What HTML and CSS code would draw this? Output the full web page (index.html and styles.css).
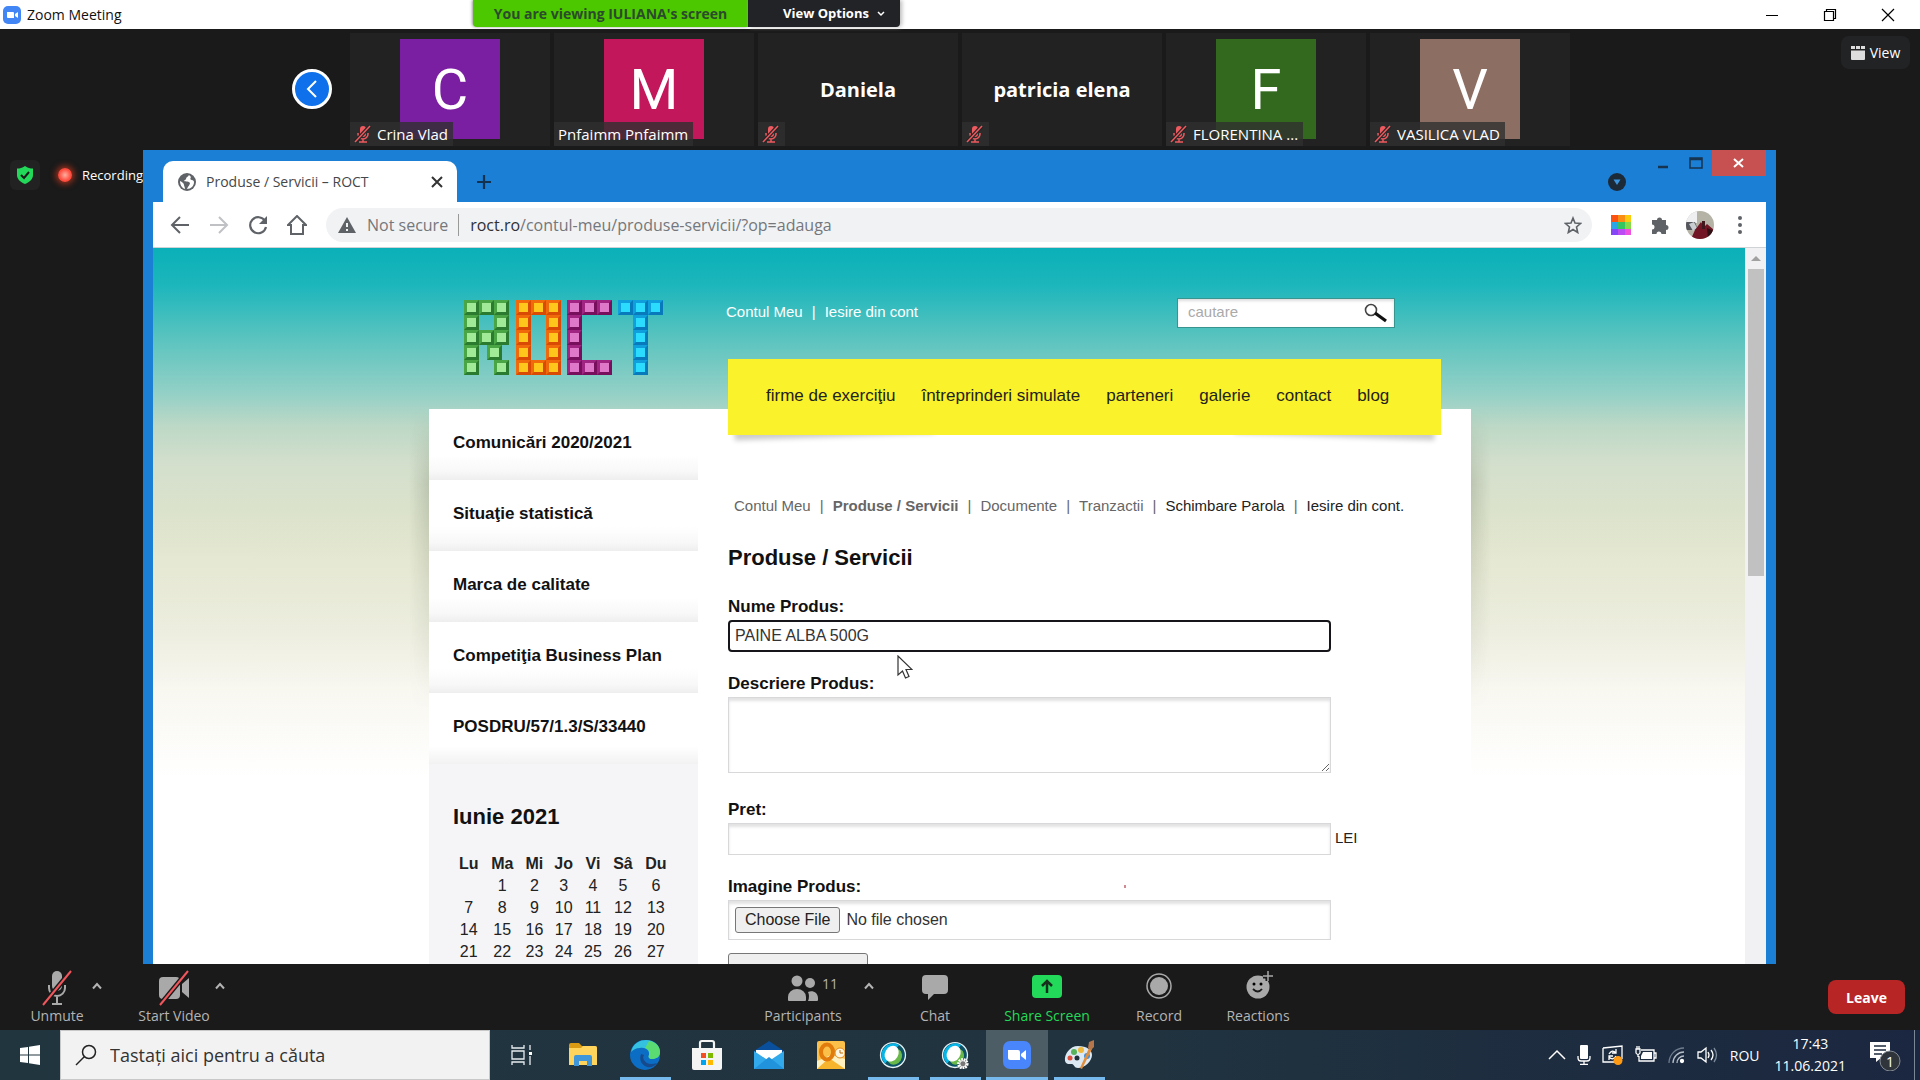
FILE: index.html
```html
<!DOCTYPE html>
<html lang="ro">
<head>
  <meta charset="UTF-8">
  <meta name="viewport" content="width=device-width, initial-scale=1.0">
  <title>Zoom Meeting</title>
  <link rel="stylesheet" href="styles.css">
</head>
<body>
  <svg class="defs" aria-hidden="true">
    <symbol id="muted" viewBox="0 0 18 18">
      <path d="M9 1a3 3 0 0 0-3 3v5a3 3 0 0 0 6 0V4a3 3 0 0 0-3-3z" fill="#ee5a5f"/>
      <path d="M4 8v1a5 5 0 0 0 10 0V8M9 14v3M5 17h8" fill="none" stroke="#ee5a5f" stroke-width="1.5"/>
      <path d="M1 17 16 1" stroke="#262626" stroke-width="4"/>
      <path d="M1 17 16 1" stroke="#ee5a5f" stroke-width="1.5"/>
    </symbol>
    <symbol id="caret" viewBox="0 0 12 8">
      <path d="M2 6.5 6 2l4 4.500" fill="none" stroke="#b4b4b4" stroke-width="2"/>
    </symbol>
    <symbol id="webex" viewBox="0 0 32 32">
      <circle cx="16" cy="16" r="15" fill="#e8f4f8"/>
      <circle cx="16" cy="16" r="13.500" fill="#0b5266"/>
      <path d="M7 26A13.500 13.500 0 0 1 23 4.500l-5 5.500z" fill="#08b4e6"/>
      <ellipse cx="18" cy="18" rx="8" ry="9.500" fill="#69b84a" transform="rotate(30 18 18)"/>
      <ellipse cx="14.500" cy="14.500" rx="7.500" ry="9.500" fill="#fff" transform="rotate(30 14.500 14.500)"/>
    </symbol>
    <!-- one coloured brick for each logo letter -->
    <symbol id="brick-r" viewBox="0 0 15 15"><path d="M0 0h15v15H0z" fill="#4aa545"/><path d="m15 0v15H0l4-4h7V4z" fill="#2a7b30"/><path d="M3 3h9v9H3z" fill="#a1ea98"/></symbol>
    <symbol id="brick-o" viewBox="0 0 15 15"><path d="M0 0h15v15H0z" fill="#f06a0c"/><path d="m15 0v15H0l4-4h7V4z" fill="#d94b05"/><path d="M3 3h9v9H3z" fill="#ffc61c"/></symbol>
    <symbol id="brick-c" viewBox="0 0 15 15"><path d="M0 0h15v15H0z" fill="#a02583"/><path d="m15 0v15H0l4-4h7V4z" fill="#770f5c"/><path d="M3 3h9v9H3z" fill="#df78c9"/></symbol>
    <symbol id="brick-t" viewBox="0 0 15 15"><path d="M0 0h15v15H0z" fill="#109fdd"/><path d="m15 0v15H0l4-4h7V4z" fill="#0879bb"/><path d="M3 3h9v9H3z" fill="#2bdcff"/></symbol>
  </svg>

  <header class="titlebar">
    <div class="titlebar-name">
      <svg width="18" height="18" viewBox="0 0 18 18"><rect width="18" height="18" rx="5" fill="#4285f4"/><path d="M4 6h6a1 1 0 0 1 1 1v5H5a1 1 0 0 1-1-1zM12 8l3-2v6l-3-2z" fill="#fff"/></svg>
      <span>Zoom Meeting</span>
    </div>
    <div class="share-banner">You are viewing IULIANA's screen</div>
    <button class="view-options">View Options
      <svg width="8" height="6" viewBox="0 0 8 6"><path d="m1 1 3 3 3-3" fill="none" stroke="#fff" stroke-width="1.500"/></svg>
    </button>
    <div class="window-buttons">
      <button aria-label="Minimize"><svg width="14" height="14" viewBox="0 0 14 14"><path d="M1 7.500h12" stroke="#000"/></svg></button>
      <button aria-label="Restore"><svg width="14" height="14" viewBox="0 0 14 14" fill="none" stroke="#000" stroke-width="1.200"><path d="M1.500 3.500h9v9h-9zM3.500 3.500v-2h9v9h-2"/></svg></button>
      <button aria-label="Close"><svg width="14" height="14" viewBox="0 0 14 14"><path d="m1 1 12 12M13 1 1 13" stroke="#000" stroke-width="1.200"/></svg></button>
    </div>
  </header>

  <section class="strip">
    <button class="strip-prev" aria-label="Previous"><svg width="14" height="20" viewBox="0 0 14 20"><path d="m11 2-8 8 8 8" fill="none" stroke="#fff" stroke-width="2"/></svg></button>
    <div class="tiles">
      <div class="tile">
        <div class="avatar purple">C</div>
        <div class="tile-name"><svg width="18" height="18"><use href="#muted"/></svg>Crina Vlad</div>
      </div>
      <div class="tile">
        <div class="avatar pink">M</div>
        <div class="tile-name">Pnfaimm Pnfaimm</div>
      </div>
      <div class="tile">
        <strong>Daniela</strong>
        <div class="tile-name"><svg width="18" height="18"><use href="#muted"/></svg></div>
      </div>
      <div class="tile">
        <strong>patricia elena</strong>
        <div class="tile-name"><svg width="18" height="18"><use href="#muted"/></svg></div>
      </div>
      <div class="tile">
        <div class="avatar green">F</div>
        <div class="tile-name"><svg width="18" height="18"><use href="#muted"/></svg>FLORENTINA ...</div>
      </div>
      <div class="tile">
        <div class="avatar brown">V</div>
        <div class="tile-name"><svg width="18" height="18"><use href="#muted"/></svg>VASILICA VLAD</div>
      </div>
    </div>
    <button class="view-btn">
      <svg width="14" height="14" viewBox="0 0 14 14" fill="#ddd"><path d="M0 0h4v3H0zM5 0h4v3H5zM10 0h4v3h-4zM0 4.500h14V13a1 1 0 0 1-1 1H1a1 1 0 0 1-1-1z"/></svg>
      View
    </button>
  </section>

  <main class="stage">
    <aside class="status">
      <div class="shield"><svg width="18" height="20" viewBox="0 0 18 20"><path d="M9 1c3 2 5 2.500 8 2.500V10c0 4-3 7-8 9-5-2-8-5-8-9V3.500C4 3.500 6 3 9 1z" fill="#23d959"/><path d="m5 10 3 3 5-6" fill="none" stroke="#1a1a1a" stroke-width="2"/></svg></div>
      <span class="rec-dot"></span>
      <span class="rec-text">Recording</span>
    </aside>

    <div class="browser">
      <div class="tabs">
        <div class="tab">
          <svg width="18" height="18" viewBox="0 0 18 18"><circle cx="9" cy="9" r="9" fill="#5f6368"/><path d="M11 2c-1 2-3 2-3 4 0 1-2 1-2 2 2 1 5 0 6 2 0 2-2 3-3 6 4 0 7-3 7-7 0-1-1-2-2-2-2 0-2-2-1-3zM2 8c2 1 4 2 4 4 0 1 1 2 1 4-3-1-5-4-5-8z" fill="#fff"/></svg>
          <span>Produse / Servicii – ROCT</span>
          <button aria-label="Close tab"><svg width="12" height="12" viewBox="0 0 12 12"><path d="m1 1 10 10M11 1 1 11" stroke="#333" stroke-width="2"/></svg></button>
        </div>
        <button class="new-tab" aria-label="New tab"><svg width="16" height="16" viewBox="0 0 16 16"><path d="M8 1v14M1 8h14" stroke="#12324f" stroke-width="2.200"/></svg></button>
        <button class="tab-search" aria-label="Search tabs"><svg width="18" height="18" viewBox="0 0 18 18"><circle cx="9" cy="9" r="9" fill="#1c2a38"/><path d="M5.500 6.500h7L9 12z" fill="#3a93dd"/></svg></button>
        <div class="browser-buttons">
          <button aria-label="Minimize"><svg width="12" height="14" viewBox="0 0 12 14"><path d="M1 11h10" stroke="#16334f" stroke-width="2.500"/></svg></button>
          <button aria-label="Maximize"><svg width="14" height="12" viewBox="0 0 14 12"><path d="M1 1h12v10H1zM1 2.500h12" fill="none" stroke="#16334f" stroke-width="1.500"/></svg></button>
          <button class="browser-close" aria-label="Close"><svg width="12" height="10" viewBox="0 0 12 10"><path d="m1 1 9 8M10 1 1 9" stroke="#fff" stroke-width="2"/></svg></button>
        </div>
      </div>

      <div class="address-row">
        <button aria-label="Back"><svg width="20" height="20" viewBox="0 0 20 20"><path d="M19 10H2M10 2l-8 8 8 8" fill="none" stroke="#5f6368" stroke-width="2"/></svg></button>
        <button aria-label="Forward"><svg width="20" height="20" viewBox="0 0 20 20"><path d="M1 10h17M10 2l8 8-8 8" fill="none" stroke="#bfc1c4" stroke-width="2"/></svg></button>
        <button aria-label="Reload"><svg width="20" height="20" viewBox="0 0 20 20"><path d="M17 6a8 8 0 1 0 1 6" fill="none" stroke="#5f6368" stroke-width="2.200"/><path d="M19 1v8h-8z" fill="#5f6368"/></svg></button>
        <button aria-label="Home"><svg width="20" height="20" viewBox="0 0 20 20"><path d="M1 10 10 1l9 9h-3v9H4v-9z" fill="none" stroke="#5f6368" stroke-width="2"/></svg></button>
        <div class="address">
          <svg width="18" height="16" viewBox="0 0 18 16"><path d="m9 0 9 16H0z" fill="#5f6368"/><path d="M9 6v4M9 12v2" stroke="#f1f2f4" stroke-width="2"/></svg>
          <span class="not-secure">Not secure</span>
          <span class="url"><b>roct.ro</b>/contul-meu/produse-servicii/?op=adauga</span>
          <svg width="18" height="18" viewBox="0 0 18 18"><path d="m9 2 2 5 5.500.500-4 3.500 1.200 5.500L9 13.500l-4.700 3L5.500 11l-4-3.500L7 7z" fill="none" stroke="#5f6368" stroke-width="1.600"/></svg>
        </div>
        <svg width="20" height="20" viewBox="0 0 20 20"><path d="M0 0h7v7H0z" fill="#fb5212"/><path d="M7 0h7v7H7z" fill="#fb8c14"/><path d="M14 0h6v7h-6z" fill="#fbcb10"/><path d="M0 7h7v7H0z" fill="#2aa5e8"/><path d="M7 7h7v7H7z" fill="#35c560"/><path d="M14 7h6v7h-6z" fill="#84dc4b"/><path d="M0 14h7v6H0z" fill="#8547f5"/><path d="M7 14h7v6H7z" fill="#bb4bf2"/><path d="M14 14h6v6h-6z" fill="#ee50e0"/></svg>
        <svg width="20" height="20" viewBox="0 0 20 20"><path d="M2 5h5a2.500 2.500 0 1 1 5 0h4v5a2.500 2.500 0 1 1 0 5v4h-4.500a2.500 2.500 0 0 0-5 0H2v-4.500a2.500 2.500 0 0 0 0-5z" fill="#5f6368"/></svg>
        <svg class="profile" width="28" height="28" viewBox="0 0 28 28"><clipPath id="face"><circle cx="14" cy="14" r="14"/></clipPath><g clip-path="url(#face)"><path d="M0 0h28v28H0z" fill="#b5b2a6"/><path d="M0 0h11v12H0z" fill="#efeff1"/><path d="M0 11h9l3 8H0z" fill="#56575e"/><path d="m3 13 5-2 3 6-4 3z" fill="#c9ccd0"/><path d="M5 28 9 19l6-8 3 5 3-3 7 6v9z" fill="#721524"/><path d="M16 10h3v8h-3z" fill="#40191e"/><path d="m21 17 7 3v8h-6z" fill="#2e1014"/></g></svg>
        <button aria-label="Menu"><svg width="6" height="18" viewBox="0 0 6 18" fill="#5f6368"><circle cx="3" cy="2" r="2"/><circle cx="3" cy="9" r="2"/><circle cx="3" cy="16" r="2"/></svg></button>
      </div>

      <div class="viewport">
        <div class="site">
          <div class="page">
            <div class="site-top">
              <a href="#" class="logo" aria-label="ROCT">
                <svg width="200" height="75" viewBox="0 0 200 75">
                  <g>
                    <use href="#brick-r" width="15" height="15"/><use href="#brick-r" x="15" width="15" height="15"/><use href="#brick-r" x="30" width="15" height="15"/>
                    <use href="#brick-r" y="15" width="15" height="15"/><use href="#brick-r" x="30" y="15" width="15" height="15"/>
                    <use href="#brick-r" y="30" width="15" height="15"/><use href="#brick-r" x="15" y="30" width="15" height="15"/><use href="#brick-r" x="30" y="30" width="15" height="15"/>
                    <use href="#brick-r" y="45" width="15" height="15"/><use href="#brick-r" x="23" y="45" width="15" height="15"/>
                    <use href="#brick-r" y="60" width="15" height="15"/><use href="#brick-r" x="30" y="60" width="15" height="15"/>
                  </g>
                  <g transform="translate(52)">
                    <use href="#brick-o" width="15" height="15"/><use href="#brick-o" x="15" width="15" height="15"/><use href="#brick-o" x="30" width="15" height="15"/>
                    <use href="#brick-o" y="15" width="15" height="15"/><use href="#brick-o" x="30" y="15" width="15" height="15"/>
                    <use href="#brick-o" y="30" width="15" height="15"/><use href="#brick-o" x="30" y="30" width="15" height="15"/>
                    <use href="#brick-o" y="45" width="15" height="15"/><use href="#brick-o" x="30" y="45" width="15" height="15"/>
                    <use href="#brick-o" y="60" width="15" height="15"/><use href="#brick-o" x="15" y="60" width="15" height="15"/><use href="#brick-o" x="30" y="60" width="15" height="15"/>
                  </g>
                  <g transform="translate(103)">
                    <use href="#brick-c" width="15" height="15"/><use href="#brick-c" x="15" width="15" height="15"/><use href="#brick-c" x="30" width="15" height="15"/>
                    <use href="#brick-c" y="15" width="15" height="15"/><use href="#brick-c" y="30" width="15" height="15"/><use href="#brick-c" y="45" width="15" height="15"/>
                    <use href="#brick-c" y="60" width="15" height="15"/><use href="#brick-c" x="15" y="60" width="15" height="15"/><use href="#brick-c" x="30" y="60" width="15" height="15"/>
                  </g>
                  <g transform="translate(154)">
                    <use href="#brick-t" width="15" height="15"/><use href="#brick-t" x="15" width="15" height="15"/><use href="#brick-t" x="30" width="15" height="15"/>
                    <use href="#brick-t" x="15" y="15" width="15" height="15"/><use href="#brick-t" x="15" y="30" width="15" height="15"/><use href="#brick-t" x="15" y="45" width="15" height="15"/><use href="#brick-t" x="15" y="60" width="15" height="15"/>
                  </g>
                </svg>
              </a>
              <div class="account">
                <a href="#">Contul Meu</a><span>|</span><a href="#">Iesire din cont</a>
              </div>
              <form class="search">
                <input type="text" placeholder="cautare" aria-label="cautare">
                <button type="button" aria-label="Cauta"><svg width="24" height="20" viewBox="0 0 24 20"><circle cx="7" cy="7" r="5.500" fill="#fff" stroke="#444" stroke-width="1.600"/><path d="m11 10 11 8" stroke="#111" stroke-width="3.200"/></svg></button>
              </form>
            </div>

            <div class="panel">
              <aside class="sidebar">
                <nav class="side-nav">
                  <a href="#">Comunicări 2020/2021</a>
                  <a href="#">Situaţie statistică</a>
                  <a href="#">Marca de calitate</a>
                  <a href="#">Competiţia Business Plan</a>
                  <a href="#">POSDRU/57/1.3/S/33440</a>
                </nav>
                <div class="calendar">
                  <h2>Iunie 2021</h2>
                  <table>
                    <thead>
                      <tr><th>Lu</th><th>Ma</th><th>Mi</th><th>Jo</th><th>Vi</th><th>Sâ</th><th>Du</th></tr>
                    </thead>
                    <tbody>
                      <tr><td></td><td>1</td><td>2</td><td>3</td><td>4</td><td>5</td><td>6</td></tr>
                      <tr><td>7</td><td>8</td><td>9</td><td>10</td><td>11</td><td>12</td><td>13</td></tr>
                      <tr><td>14</td><td>15</td><td>16</td><td>17</td><td>18</td><td>19</td><td>20</td></tr>
                      <tr><td>21</td><td>22</td><td>23</td><td>24</td><td>25</td><td>26</td><td>27</td></tr>
                    </tbody>
                  </table>
                </div>
              </aside>

              <div class="content">
                <nav class="main-nav">
                  <a href="#">firme de exerciţiu</a>
                  <a href="#">întreprinderi simulate</a>
                  <a href="#">parteneri</a>
                  <a href="#">galerie</a>
                  <a href="#">contact</a>
                  <a href="#">blog</a>
                </nav>
                <div class="crumbs">
                  <a href="#">Contul Meu</a><span>|</span><a href="#" class="current">Produse / Servicii</a><span>|</span><a href="#">Documente</a><span>|</span><a href="#">Tranzactii</a><span>|</span><a href="#" class="dark">Schimbare Parola</a><span>|</span><a href="#" class="dark">Iesire din cont.</a>
                </div>
                <h1>Produse / Servicii</h1>
                <form class="product">
                  <label for="nume">Nume Produs:</label>
                  <input type="text" id="nume" class="focused" value="PAINE ALBA 500G">
                  <label for="descriere">Descriere Produs:</label>
                  <textarea id="descriere"></textarea>
                  <label for="pret">Pret:</label>
                  <div class="price"><input type="text" id="pret"><span>LEI</span></div>
                  <label for="imagine">Imagine Produs:</label>
                  <input type="file" id="imagine">
                  <button type="button" class="submit" aria-label="Adauga"></button>
                </form>
              </div>
            </div>
          </div>
        </div>
        <div class="scrollbar"><span class="scroll-up"></span><span class="thumb"></span></div>
      </div>
      <svg class="cursor" width="16" height="24" viewBox="0 0 16 24"><path d="M1 1v19l4.500-4 3 7 3.500-1.500-3-7h6z" fill="#fff" stroke="#333" stroke-width="1.200"/></svg>
      <span class="speck"></span>
    </div>
  </main>

  <footer class="controls">
    <div class="controls-left">
      <button class="ctl unmute">
        <svg width="30" height="36" viewBox="0 0 30 36"><rect x="10" y="1" width="10" height="20" rx="5" fill="#a9a9a9"/><path d="M7 15v3a8 8 0 0 0 16 0v-3M15 26v7M10 34h10" fill="none" stroke="#a9a9a9" stroke-width="2"/><path d="M1 35 29 1" stroke="#1a1a1a" stroke-width="5"/><path d="M1 35 29 1" stroke="#f0565c" stroke-width="2"/></svg>
        <span>Unmute</span>
      </button>
      <button class="more" aria-label="Audio options"><svg width="12" height="8"><use href="#caret"/></svg></button>
      <button class="ctl video">
        <svg width="32" height="36" viewBox="0 0 32 36"><rect x="1" y="7" width="21" height="22" rx="4" fill="#a9a9a9"/><path d="m24 14 7-6v20l-7-6z" fill="#a9a9a9"/><path d="M2 35 30 1" stroke="#1a1a1a" stroke-width="5"/><path d="M2 35 30 1" stroke="#f0565c" stroke-width="2"/></svg>
        <span>Start Video</span>
      </button>
      <button class="more" aria-label="Video options"><svg width="12" height="8"><use href="#caret"/></svg></button>
    </div>
    <div class="controls-mid">
      <button class="ctl people">
        <svg width="32" height="36" viewBox="0 0 32 36" fill="#a9a9a9"><circle cx="10" cy="11" r="5.500"/><circle cx="23" cy="13" r="5"/><path d="M1 30v-3a9 8 0 0 1 18 0v3q0 1-1 1H2q-1 0-1-1zM21 31h9q1 0 1-1v-2c0-5-5-8-10-6q2 4 0 9z"/></svg>
        <em>11</em>
        <span>Participants</span>
      </button>
      <button class="more" aria-label="Participant options"><svg width="12" height="8"><use href="#caret"/></svg></button>
      <button class="ctl chat">
        <svg width="28" height="36" viewBox="0 0 28 36" fill="#a9a9a9"><path d="M5 5h18a4 4 0 0 1 4 4v11a4 4 0 0 1-4 4H13l-6 6v-6H5a4 4 0 0 1-4-4V9a4 4 0 0 1 4-4z"/></svg>
        <span>Chat</span>
      </button>
      <button class="ctl share">
        <svg width="30" height="36" viewBox="0 0 30 36"><rect y="5" width="30" height="23" rx="4" fill="#23d959"/><path d="M15 23V11M10 16l5-5 5 5" fill="none" stroke="#16301d" stroke-width="2.500"/></svg>
        <span>Share Screen</span>
      </button>
      <button class="ctl record">
        <svg width="28" height="36" viewBox="0 0 28 36"><circle cx="14" cy="16" r="12" fill="none" stroke="#a9a9a9" stroke-width="1.500"/><circle cx="14" cy="16" r="9" fill="#a9a9a9"/></svg>
        <span>Record</span>
      </button>
      <button class="ctl reactions">
        <svg width="32" height="36" viewBox="0 0 32 36"><circle cx="16" cy="17" r="11.500" fill="#a9a9a9"/><path d="M26 1v10M21 6h10" stroke="#1a1a1a" stroke-width="5"/><path d="M26 1v10M21 6h10" stroke="#a9a9a9" stroke-width="1.500"/><circle cx="12" cy="14" r="1.500"/><circle cx="19" cy="14" r="1.500"/><path d="M11 19q5 5 9 0" fill="none" stroke="#1a1a1a" stroke-width="1.800"/></svg>
        <span>Reactions</span>
      </button>
    </div>
    <button class="leave">Leave</button>
  </footer>

  <div class="taskbar">
    <button class="start" aria-label="Start"><svg width="20" height="20" viewBox="0 0 20 20" fill="#fff"><path d="M0 3 8 2v7.500H0zM9 1.800 20 0v9.500H9zM0 10.500h8V18l-8-1zM9 10.500h11V20L9 18.200z"/></svg></button>
    <label class="task-search">
      <svg width="22" height="22" viewBox="0 0 22 22" fill="none" stroke="#222" stroke-width="1.500"><circle cx="14" cy="8" r="6.500"/><path d="m9.500 12.500-8.500 8.500"/></svg>
      <input type="text" placeholder="Tastați aici pentru a căuta">
    </label>
    <div class="apps">
      <button aria-label="Task view"><svg width="22" height="22" viewBox="0 0 22 22" fill="none" stroke="#e8edf0" stroke-width="1.300"><path d="M2 1v3h12V1M2 21v-3h12v3M2 7h12v8H2zM20 1v5M20 12v9"/><path d="M19 8h3v3h-3z" fill="#fff" stroke="none"/></svg></button>
      <button aria-label="File Explorer"><svg width="28" height="26" viewBox="0 0 28 26"><path d="M0 3q0-2 2-2h8l3 3h13q2 0 2 2v4H0z" fill="#d99b13"/><path d="M0 6h12l2-2h12q2 0 2 2v17H0z" fill="#ffd45c"/><path d="M5 24V15q0-2 2-2h14q2 0 2 2v9h-5v-5h-8v5z" fill="#3f97d9"/></svg></button>
      <button class="running" aria-label="Edge"><svg width="32" height="32" viewBox="0 0 32 32"><circle cx="16" cy="16" r="15" fill="#0c6dc4"/><path d="M2 13C4 4 11 1 17 1c9 0 14 6 14 12 0 5-4 7-8 7-3 0-4-2-3-4 1-5-4-8-9-7-4 0-7 2-9 4z" fill="#35c1e0"/><path d="M20 2c7 1 11 6 11 11 0 5-4 7-8 7-3 0-4-2-3-4 1-4-1-6-4-7z" fill="#5bdc72"/><path d="M12 15c-2 5 0 11 6 13 4 1 8-1 10-4-6 2-11 1-13-3-1-2-1-3 0-5z" fill="#164a8c"/></svg></button>
      <button aria-label="Store"><svg width="30" height="32" viewBox="0 0 30 32"><path d="M8 10V4q0-2 2-2h10q2 0 2 2v6" fill="none" stroke="#f4f4f4" stroke-width="2.200"/><path d="M0 9h30v20q0 2-2 2H2q-2 0-2-2z" fill="#f4f4f4"/><path d="M9 14h5v5H9z" fill="#f25022"/><path d="M16 14h5v5h-5z" fill="#7fba00"/><path d="M9 21h5v5H9z" fill="#00a4ef"/><path d="M16 21h5v5h-5z" fill="#ffb900"/></svg></button>
      <button aria-label="Mail"><svg width="30" height="28" viewBox="0 0 30 28"><path d="M0 10 15 0l15 10v10H0z" fill="#0a4f9c"/><path d="M2 9h26v12H2z" fill="#fff"/><path d="m0 10 15 10 15-10v18H0z" fill="#32a9ea"/><path d="m0 28 15-12 15 12z" fill="#2093dc"/></svg></button>
      <button aria-label="Outlook"><svg width="28" height="28" viewBox="0 0 28 28"><rect width="28" height="28" rx="2" fill="#fbc04a"/><path d="m0 20 14-6 14 4v10H0z" fill="#fff0c0"/><path d="m0 28 12-11 16 11z" fill="#f7b52e"/><ellipse cx="10" cy="11" rx="6" ry="7.500" fill="none" stroke="#e07b0c" stroke-width="4"/><circle cx="23" cy="12" r="5" fill="#fff6df" stroke="#e08b21"/><path d="M23 9v3h3" fill="none" stroke="#b86a10"/></svg></button>
      <button class="running" aria-label="Webex"><svg width="28" height="28"><use href="#webex"/></svg></button>
      <button class="running" aria-label="Webex settings"><svg width="28" height="28" viewBox="0 0 32 32"><use href="#webex"/><circle cx="25" cy="26" r="5" fill="#777" stroke="#fff" stroke-width="3" stroke-dasharray="2 1"/><circle cx="25" cy="26" r="3.500" fill="#777" stroke="#fff"/></svg></button>
      <button class="running active" aria-label="Zoom"><svg width="28" height="28" viewBox="0 0 28 28"><rect width="28" height="28" rx="7" fill="#4a86fb"/><path d="M5 9h10q2 0 2 2v8H7q-2 0-2-2zM18 13l5-4v10l-5-4z" fill="#fff"/></svg></button>
      <button class="running" aria-label="Paint"><svg width="30" height="30" viewBox="0 0 30 30"><path d="M14 6C6 6 0 14 1 21c1 4 5 3 7 3s2 4 6 4c7 0 14-7 14-13 0-5-5-9-14-9z" fill="#dce9f2"/><circle cx="10" cy="12" r="3" fill="#57b259"/><circle cx="17" cy="10" r="3" fill="#f0b93b"/><circle cx="6" cy="18" r="2.500" fill="#e0503c"/><circle cx="13" cy="18" r="2.500" fill="#22303a"/><circle cx="23" cy="16" r="3" fill="#3d8ede"/><path d="m16 28 9-20 3 1-10 20z" fill="#e08d3c"/><path d="m24 8 1-6 5-2v7l-3 3z" fill="#b4764a"/></svg></button>
    </div>
    <div class="tray">
      <svg width="18" height="12" viewBox="0 0 18 12"><path d="m1 10 8-8 8 8" fill="none" stroke="#fff" stroke-width="1.500"/></svg>
      <svg width="14" height="20" viewBox="0 0 14 20"><rect x="3" width="8" height="14" rx="1" fill="#fff"/><path d="M1 11v2q0 3 3 3h6q3 0 3-3v-2M7 16v3M3 19.300h8" fill="none" stroke="#fff" stroke-width="1.300"/></svg>
      <svg width="22" height="20" viewBox="0 0 22 20"><path d="m1 3 19-2v13M1 3v14h12" fill="none" stroke="#fff" stroke-width="1.300"/><path d="M7 9q3-5 7-1M14 11q-3 5-7 1M14 4v4h-4M7 15v-4h4" fill="none" stroke="#fff" stroke-width="1.300"/><circle cx="16" cy="15.500" r="4.500" fill="#ff9a14"/></svg>
      <svg width="22" height="18" viewBox="0 0 22 18"><path d="M6 4h13v11H4v-5M19 7h2v5h-2M1 3h4v4q-2 3-4 0zM2 0v3M4 0v3M3 8v3" fill="none" stroke="#fff" stroke-width="1.300"/><path d="M8 6h9v7H6v-3z" fill="#fff"/></svg>
      <svg width="18" height="18" viewBox="0 0 18 18" fill="none" stroke="#6f7d8e" stroke-width="1.300"><path d="M1 17A15 15 0 0 1 16 2"/><path d="M5 17A11 11 0 0 1 16 6M9 17a7 7 0 0 1 7-7" stroke="#b5bec8"/><circle cx="14" cy="15" r="1.500" fill="#fff" stroke="#fff"/></svg>
      <svg width="22" height="18" viewBox="0 0 22 18" fill="none" stroke="#fff" stroke-width="1.300"><path d="M1 6h3l5-4v14l-5-4H1zM11 6q2 3 0 6M14 4q4 5 0 10"/><path d="M17 2q5 7 0 14" stroke="#7e8b9c"/></svg>
      <span class="lang">ROU</span>
      <div class="clock"><span>17:43</span><span>11.06.2021</span></div>
      <button class="notes" aria-label="Notifications"><svg width="32" height="32" viewBox="0 0 32 32"><path d="M1 3h20v16h-9l-5 4v-4H1z" fill="#fff"/><path d="M5 7h12M5 11h12M5 15h8" stroke="#1d2a3e" stroke-width="1.400"/><circle cx="21" cy="22" r="10" fill="#30353c" stroke="#848a92"/></svg><b>1</b></button>
    </div>
  </div>
</body>
</html>
```

FILE: styles.css
```css
* {
  box-sizing: border-box;
}
body {
  margin: 0;
  height: 100vh;
  display: flex;
  flex-direction: column;
  overflow: hidden;
  background: #1a1a1a;
  font-family: "Open Sans", "Noto Sans", sans-serif;
  font-size: 14px;
}
button {
  margin: 0;
  padding: 0;
  border: 0;
  background: none;
  font: inherit;
  color: inherit;
}
a {
  color: inherit;
  text-decoration: none;
}
svg {
  display: block;
  flex-shrink: 0;
}
.defs {
  position: absolute;
  width: 0;
  height: 0;
}

/* title bar */
.titlebar {
  display: flex;
  height: 29px;
  flex-shrink: 0;
  background: #fff;
}
.titlebar-name {
  width: 473px;
  display: flex;
  align-items: center;
  gap: 6px;
  padding-left: 3px;
  color: #111;
}
.share-banner,
.view-options {
  height: 27px;
  line-height: 27px;
  font-weight: bold;
  text-align: center;
}
.share-banner {
  width: 275px;
  background: #4bc800;
  color: #2c4a2c;
  border-radius: 0 0 0 4px;
  box-shadow: -1px 0 3px #999;
}
.view-options {
  width: 152px;
  display: flex;
  justify-content: center;
  align-items: center;
  gap: 8px;
  padding-left: 20px;
  background: #222326;
  color: #fff;
  font-size: 13px;
  border-radius: 0 0 4px 0;
  box-shadow: 2px 0 4px #bbb;
}
.window-buttons {
  margin: 0 3px 0 auto;
  display: flex;
}
.window-buttons button {
  width: 58px;
  display: flex;
  justify-content: center;
  align-items: center;
}

/* participants */
.strip {
  display: grid;
  grid-template-columns: 1fr auto 1fr;
  height: 121px;
  flex-shrink: 0;
  padding-top: 4px;
}
.strip-prev {
  width: 40px;
  height: 40px;
  margin: 36px 18px 0 0;
  justify-self: end;
  display: flex;
  justify-content: center;
  align-items: center;
  border: 3px solid #fff;
  border-radius: 50%;
  background: #0e71eb;
}
.tiles {
  display: flex;
  gap: 4px;
}
.tile {
  position: relative;
  width: 200px;
  height: 113px;
  display: flex;
  justify-content: center;
  align-items: center;
  background: #222;
  color: #fff;
}
.tile strong {
  font-size: 20px;
}
.avatar {
  width: 100px;
  height: 100px;
  margin-bottom: 2px;
  font-family: Roboto, sans-serif;
  font-size: 56px;
  line-height: 102px;
  text-align: center;
}
.purple { background: #7b1fa2; }
.pink { background: #c2185b; }
.green { background: #33691e; }
.brown { background: #8d6e63; }
.tile-name {
  position: absolute;
  left: 0;
  bottom: 0;
  height: 24px;
  display: flex;
  align-items: center;
  gap: 5px;
  padding: 0 5px 0 4px;
  background: rgba(48, 48, 48, 0.8);
  font-size: 15px;
}
.view-btn {
  justify-self: end;
  width: 69px;
  height: 33px;
  margin: 3px 10px 0 0;
  display: flex;
  justify-content: center;
  align-items: center;
  gap: 5px;
  border-radius: 8px;
  background: #222325;
  color: #fff;
}

/* stage */
.stage {
  flex: 1;
  min-height: 0;
  display: flex;
  padding-right: 144px;
}
.status {
  width: 143px;
  flex-shrink: 0;
  display: flex;
  align-items: center;
  align-self: flex-start;
  height: 30px;
  margin-top: 10px;
  padding-left: 10px;
  color: #fff;
}
.shield {
  width: 30px;
  height: 30px;
  flex-shrink: 0;
  display: flex;
  justify-content: center;
  align-items: center;
  border-radius: 6px;
  background: #222;
}
.rec-dot {
  width: 14px;
  height: 14px;
  flex-shrink: 0;
  margin: 0 10px 0 18px;
  border-radius: 50%;
  background: radial-gradient(#ffb0a0, #ff4a3c 60%);
  box-shadow: 0 0 6px 2px #a8321c;
}
.rec-text {
  font-size: 13px;
}

/* browser */
.browser {
  position: relative;
  flex: 1;
  min-width: 0;
  display: flex;
  flex-direction: column;
  padding: 0 10px;
  background: #1b7fd6;
}
.tabs {
  display: flex;
  height: 52px;
  flex-shrink: 0;
}
.tab {
  width: 294px;
  height: 41px;
  margin: 11px 0 0 10px;
  padding: 0 14px 0 15px;
  display: flex;
  align-items: center;
  gap: 10px;
  border-radius: 10px 10px 0 0;
  background: #fff;
  color: #45474a;
}
.tab button {
  margin-left: auto;
}
.new-tab {
  margin: 11px auto 0 19px;
}
.tab-search {
  margin: 11px 20px 0 0;
}
.browser-buttons {
  display: flex;
  align-items: flex-start;
}
.browser-buttons button {
  width: 33px;
  height: 26px;
  display: flex;
  justify-content: center;
  align-items: center;
}
.browser-buttons .browser-close {
  width: 54px;
  background: #c75050;
}
.address-row {
  display: flex;
  align-items: center;
  height: 46px;
  flex-shrink: 0;
  padding: 0 23px 0 17px;
  gap: 19px;
  background: #fff;
  border-bottom: 1px solid #cfd3d6;
}
.profile {
  margin-left: -3px;
  margin-right: 4px;
}
.address {
  flex: 1;
  height: 34px;
  display: flex;
  align-items: center;
  gap: 11px;
  padding: 0 10px 0 12px;
  border-radius: 17px;
  background: #f1f2f4;
  font-size: 16px;
  color: #74777b;
}
.not-secure {
  padding-right: 10px;
  border-right: 1px solid #999;
}
.url {
  flex: 1;
}
.url b {
  font-weight: normal;
  color: #2e3033;
}

/* web page */
.viewport {
  flex: 1;
  min-height: 0;
  display: flex;
}
.site {
  flex: 1;
  overflow: hidden;
  padding-left: 2px;
  background: linear-gradient(#0ab0b8 0, #1cb6bc 37px, #5cc4bf 92px, #93d0c6 145px, #bcd8c6 177px, #d3dfcc 215px, #dde3cc 272px, #e5e8d2 312px, #ecedde 380px, #f8f7f0 440px, #fff 530px);
  font-family: "Liberation Sans", Arial, sans-serif;
  font-size: 15px;
  color: #222;
}
.page {
  position: relative;
  z-index: 0;
  width: 1042px;
  margin: 0 auto;
}
.site-top {
  display: flex;
  align-items: flex-start;
  height: 161px;
  padding: 50px 76px 0 35px;
}
.logo {
  margin-top: 2px;
}
.account {
  display: flex;
  gap: 9px;
  margin: 4px auto 0 62px;
  line-height: 20px;
  color: #fff;
}
.search {
  display: flex;
  align-items: center;
  width: 218px;
  height: 30px;
  padding-right: 6px;
  background: #fff;
  border: 1px solid #38948f;
  box-shadow: inset 0 2px 3px #ddd;
}
.search input {
  flex: 1;
  min-width: 0;
  padding: 0 10px 4px;
  border: 0;
  background: none;
  font: inherit;
}
.search input::placeholder {
  color: #aaa;
}
.panel {
  position: relative;
  display: flex;
  align-items: flex-start;
  min-height: 700px;
  background: #fff;
}
/* soft shade along both sides, fading out downwards */
.panel::before {
  content: "";
  position: absolute;
  z-index: -1;
  top: 0;
  left: -20px;
  right: -20px;
  height: 300px;
  background: linear-gradient(90deg, transparent, rgba(80, 90, 70, 0.2) 20px, rgba(80, 90, 70, 0.2) calc(100% - 20px), transparent);
  mask-image: linear-gradient(transparent, #000 25%, transparent);
}
.sidebar {
  width: 269px;
  flex-shrink: 0;
  background: #f5f5f7;
}
.side-nav a {
  display: block;
  height: 71px;
  padding: 24px 0 0 24px;
  background: linear-gradient(#fff 65%, #f8f8f9 88%, #eeeeef);
  font-size: 17px;
  font-weight: bold;
  line-height: 20px;
  color: #111;
}
.side-nav a:last-child {
  background: linear-gradient(#fff 75%, #f2f2f3);
}
.calendar {
  min-height: 400px;
  padding: 39px 24px 0;
}
h1,
h2 {
  margin: 0;
  font-size: 22px;
  line-height: 28px;
  color: #111;
}
.calendar table {
  width: 220px;
  margin-top: 22px;
  border-collapse: collapse;
  font-size: 16px;
  line-height: 22px;
  text-align: center;
}
.calendar th,
.calendar td {
  padding: 0;
}
.content {
  position: relative;
  z-index: 0;
  flex: 1;
  padding-left: 30px;
}
.main-nav {
  position: relative;
  display: flex;
  align-items: center;
  gap: 26px;
  height: 76px;
  margin: -50px 30px 0 0;
  padding: 0 0 2px 38px;
  background: #faf22a;
  font-size: 17px;
}
/* lifted corners under the yellow bar */
.main-nav::before,
.main-nav::after {
  content: "";
  position: absolute;
  z-index: -1;
  bottom: 6px;
  width: 200px;
  height: 20px;
  box-shadow: 0 8px 5px #ccc;
}
.main-nav::before {
  left: 6px;
  transform: rotate(-2deg);
}
.main-nav::after {
  right: 6px;
  transform: rotate(2deg);
}
.crumbs {
  display: flex;
  gap: 9px;
  margin: 61px 0 28px 6px;
  line-height: 20px;
  color: #666;
}
.crumbs .current {
  font-weight: bold;
}
.crumbs .dark {
  color: #222;
}
.product {
  width: 603px;
  padding-top: 3px;
}
.product label {
  display: block;
  margin: 22px 0 3px;
  font-size: 17px;
  font-weight: bold;
  line-height: 20px;
  color: #111;
}
.product input,
.product textarea {
  display: block;
  width: 603px;
  height: 32px;
  padding: 0 6px;
  background: #fff;
  border: 1px solid #d8d8da;
  box-shadow: inset 0 3px 3px #e2e2e4;
  font-family: inherit;
  font-size: 16px;
  color: #333;
}
.product .focused {
  padding: 0 5px;
  border: 2px solid #15151a;
  border-radius: 4px;
  box-shadow: none;
}
.product textarea {
  height: 76px;
  margin-bottom: 27px;
}
.price {
  display: flex;
  align-items: center;
  gap: 4px;
}
.price input {
  flex-shrink: 0;
}
.price span {
  padding-bottom: 4px;
}
.product input[type="file"] {
  height: 40px;
  padding: 6px;
}
.product input::file-selector-button {
  height: 26px;
  margin: 0 6px 0 0;
  padding: 0 9px;
  border: 1px solid #777;
  border-radius: 3px;
  background: #efefef;
  font: inherit;
  color: #222;
}
.submit {
  width: 140px;
  height: 30px;
  margin-top: 13px;
  border: 1px solid #777;
  border-radius: 3px;
  background: #efefef;
}
.scrollbar {
  width: 21px;
  display: flex;
  flex-direction: column;
  align-items: center;
  background: #f1f1f3;
}
.scroll-up {
  margin: 8px 0 8px;
  border: 5px solid transparent;
  border-top: 0;
  border-bottom-color: #a0a0a0;
}
.thumb {
  width: 16px;
  height: 307px;
  background: #c1c1c1;
}
.cursor {
  position: absolute;
  left: 754px;
  top: 505px;
}
.speck {
  position: absolute;
  left: 981px;
  top: 735px;
  width: 2px;
  height: 3px;
  background: #d08a92;
}

/* meeting controls */
.controls {
  display: flex;
  height: 66px;
  flex-shrink: 0;
  background: #1a1a1a;
  color: #b4b4b4;
}
.controls-left,
.controls-mid {
  display: flex;
}
.controls-left {
  flex: 1;
  padding-left: 23px;
}
.ctl {
  position: relative;
  display: flex;
  flex-direction: column;
  align-items: center;
  width: 112px;
  padding-top: 6px;
  line-height: 20px;
}
.unmute {
  width: 68px;
}
.video {
  width: 80px;
}
.reactions {
  width: 86px;
}
.ctl em {
  position: absolute;
  left: 75px;
  top: 10px;
  font-style: normal;
}
.ctl.share {
  color: #23d959;
}
.more {
  width: 12px;
  height: 44px;
  margin-right: 31px;
  display: flex;
  justify-content: center;
  align-items: center;
}
.controls-mid .more {
  width: 20px;
  margin: 0;
}
.leave {
  width: 77px;
  height: 34px;
  margin: 16px 15px 0 527px;
  border-radius: 8px;
  background: #b82525;
  color: #fff;
  font-weight: bold;
}

/* taskbar */
.taskbar {
  display: flex;
  height: 50px;
  flex-shrink: 0;
  background: linear-gradient(90deg, #21353f, #20333f 60%, #1b2740);
  color: #fff;
}
.start {
  width: 60px;
  display: flex;
  justify-content: center;
  align-items: center;
}
.task-search {
  width: 430px;
  display: flex;
  align-items: center;
  gap: 13px;
  padding-left: 14px;
  background: #f2f2f2;
  border: 1px solid #c8c8c8;
}
.task-search input {
  flex: 1;
  border: 0;
  padding: 0;
  background: none;
  font: inherit;
  font-size: 18px;
}
.task-search input::placeholder {
  color: #333;
}
.apps {
  display: flex;
}
.apps button {
  width: 62px;
  display: flex;
  justify-content: center;
  align-items: center;
}
.apps .running {
  background: linear-gradient(#76b9ed, #76b9ed) bottom / 51px 3px no-repeat;
}
.apps .active {
  background: linear-gradient(#76b9ed, #76b9ed) bottom / 100% 3px no-repeat #4d5d66;
}
.tray {
  margin-left: auto;
  display: flex;
  align-items: center;
  gap: 11px;
}
.lang {
  margin-right: 4px;
}
.clock {
  display: flex;
  flex-direction: column;
  align-items: center;
  gap: 2px;
  line-height: 20px;
}
.notes {
  position: relative;
  height: 50px;
  margin: 0 5px 0 12px;
  padding-right: 13px;
  border-right: 1px solid #7a8794;
  display: flex;
  align-items: center;
}
.notes b {
  position: absolute;
  left: 17px;
  top: 22px;
  font-weight: normal;
}
```
